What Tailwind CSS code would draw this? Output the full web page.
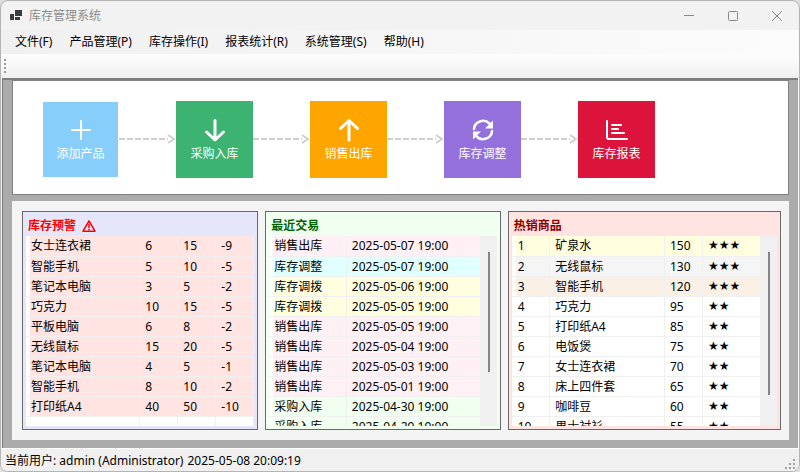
<!DOCTYPE html>
<html lang="zh-CN">
<head>
    <meta charset="UTF-8">
    <meta name="viewport" content="width=device-width, initial-scale=1.0">
    <title>库存管理系统</title>
    <script src="https://cdn.jsdelivr.net/npm/@tailwindcss/browser@4"></script>
</head>
<body class="bg-[#dedede] font-['Noto_Sans','Noto_Sans_CJK_SC',sans-serif] text-xs text-black">
    <div class="h-screen flex flex-col bg-[#f2f2f2] border border-[#b4b4b4] rounded-lg overflow-hidden">
        <!-- Title bar -->
        <header class="h-[29px] shrink-0 flex items-center pl-2">
            <svg class="w-4 h-4" viewBox="0 0 16 16" fill="#3c3c3c" aria-hidden="true">
                <path d="M6 2h7v6H6zM1 6h4v6H1zM6 9h5v3H6z"/>
            </svg>
            <h1 class="pl-1 text-[#8c8c8c]">库存管理系统</h1>
            <div class="ml-auto flex h-full text-[#8a8a8a]">
                <button class="w-11 flex items-center justify-center" aria-label="最小化">
                    <svg class="w-3 h-3" viewBox="0 0 12 12" fill="none" stroke="currentColor"><path d="M1 5.500h10"/></svg>
                </button>
                <button class="w-11 flex items-center justify-center" aria-label="最大化">
                    <svg class="w-3 h-3" viewBox="0 0 12 12" fill="none" stroke="currentColor"><rect x="1.5" y="1.5" width="9" height="9" rx="1"/></svg>
                </button>
                <button class="w-11 flex items-center justify-center" aria-label="关闭">
                    <svg class="w-3 h-3" viewBox="0 0 12 12" fill="none" stroke="currentColor"><path d="M1 1l10 10M11 1L1 11"/></svg>
                </button>
            </div>
        </header>

        <!-- Menu -->
        <nav class="h-6 shrink-0 flex items-center gap-[17px] px-[14px] bg-linear-to-r from-[#f0f0f0] to-[#fcfcfc]">
            <button>文件(F)</button>
            <button>产品管理(P)</button>
            <button>库存操作(I)</button>
            <button>报表统计(R)</button>
            <button>系统管理(S)</button>
            <button>帮助(H)</button>
        </nav>

        <!-- Tool strip -->
        <div class="h-6 shrink-0 flex items-center pl-[3px] bg-linear-to-b from-[#fdfdfd] to-[#f0f0f0]">
            <svg class="w-[2px] h-[14px]" viewBox="0 0 2 14" fill="#9a9a9a" aria-hidden="true">
                <path d="M0 0h2v2H0zM0 4h2v2H0zM0 8h2v2H0zM0 12h2v2H0z"/>
            </svg>
        </div>

        <main class="flex-1 min-h-0 mx-px flex flex-col gap-[6px] pb-2 px-[9px] bg-[#ababab] border-t-2 border-l border-t-[#7d7d7d] border-l-[#7d7d7d]">
            <!-- Workflow -->
            <section class="h-[115px] shrink-0 flex items-center px-[30px] pt-[3px] bg-white border border-[#808080]">
                <button class="w-[75px] h-[75px] flex flex-col items-center justify-center gap-1 pt-px bg-[#87cefa] text-white">
                    <svg class="w-6 h-6" viewBox="0 0 24 24" fill="none" stroke="currentColor" stroke-width="2" stroke-linecap="round"><path d="M12 3v18M3 12h18"/></svg>
                    添加产品
                </button>
                <svg class="w-[58px] h-3" viewBox="0 0 58 12" fill="none" stroke="#cfcfcf" stroke-width="2"><path stroke-dasharray="6 2" d="M1 6h49"/><path d="M50 2l6 4-6 4"/></svg>
                <button class="w-[77px] h-[77px] flex flex-col items-center justify-center gap-1 pt-px bg-[#3cb371] text-white">
                    <svg class="w-6 h-6" viewBox="0 0 24 24" fill="none" stroke="currentColor" stroke-width="3" stroke-linecap="round" stroke-linejoin="round"><path d="M12 2.500v19M3.500 14l8.500 8 8.500-8"/></svg>
                    采购入库
                </button>
                <svg class="w-[57px] h-3" viewBox="0 0 57 12" fill="none" stroke="#cfcfcf" stroke-width="2"><path stroke-dasharray="6 2" d="M0 6h49"/><path d="M49 2l6 4-6 4"/></svg>
                <button class="w-[77px] h-[77px] flex flex-col items-center justify-center gap-1 pt-px bg-[#ffa500] text-white">
                    <svg class="w-6 h-6" viewBox="0 0 24 24" fill="none" stroke="currentColor" stroke-width="3" stroke-linecap="round" stroke-linejoin="round"><path d="M12 22V3M3.500 10.500l8.500-8 8.500 8"/></svg>
                    销售出库
                </button>
                <svg class="w-[57px] h-3" viewBox="0 0 57 12" fill="none" stroke="#cfcfcf" stroke-width="2"><path stroke-dasharray="6 2" d="M0 6h49"/><path d="M49 2l6 4-6 4"/></svg>
                <button class="w-[77px] h-[77px] flex flex-col items-center justify-center gap-1 pt-px bg-[#9370db] text-white">
                    <svg class="w-6 h-6" viewBox="0 0 24 24" fill="none" stroke="currentColor" stroke-width="2.600" stroke-linecap="round">
                        <path d="M3 11a9 8.500 0 0 1 15.500-5.500M21 13a9 8.500 0 0 1-15.500 5.500"/>
                        <path d="M22 2.500v8h-8zM2 21.500v-8h8z" fill="currentColor" stroke="none"/>
                    </svg>
                    库存调整
                </button>
                <svg class="w-[57px] h-3" viewBox="0 0 57 12" fill="none" stroke="#cfcfcf" stroke-width="2"><path stroke-dasharray="6 2" d="M0 6h49"/><path d="M49 2l6 4-6 4"/></svg>
                <button class="w-[77px] h-[77px] flex flex-col items-center justify-center gap-1 pt-px bg-[#dc143c] text-white">
                    <svg class="w-6 h-6" viewBox="0 0 24 24" fill="none" stroke="currentColor" stroke-width="2" stroke-linecap="round" stroke-linejoin="round"><path d="M2 3v16q0 2 2 2h18M7 7h9M7 11h6M7 15h12"/></svg>
                    库存报表
                </button>
            </section>

            <!-- Lists -->
            <section class="flex-1 min-h-0 grid grid-cols-[236fr_235fr_273fr] gap-[7px] p-[10px] pr-2 bg-[#f4f4f4]">
                <div class="min-h-0 flex flex-col p-[3px] bg-[#e6e6fa] border border-[#696969]">
                    <h2 class="h-[21px] shrink-0 flex items-center gap-[6px] pl-[2px] font-bold text-[#ff0000]">
                        库存预警
                        <svg class="w-[14px] h-3" viewBox="0 0 14 12" fill="none" stroke="currentColor" stroke-width="1.500" stroke-linejoin="round" aria-hidden="true"><path d="M7 1l6 10.200H1zM7 4v4M7 8.800v1.400"/></svg>
                    </h2>
                    <div class="flex-1 min-h-0 overflow-hidden bg-white">
                        <table class="w-full"><tbody id="warnings"></tbody></table>
                    </div>
                </div>

                <div class="min-h-0 flex flex-col p-[3px] bg-[#f0fff0] border border-[#696969]">
                    <h2 class="h-[21px] shrink-0 flex items-center pl-[2px] font-bold text-[#006400]">最近交易</h2>
                    <div class="flex-1 min-h-0 flex overflow-hidden bg-white">
                        <div class="flex-1 overflow-hidden">
                            <table class="w-full"><tbody id="transactions"></tbody></table>
                        </div>
                        <div class="w-4 flex justify-center pt-4 bg-[#f0f0f0]">
                            <div class="w-[2px] h-[120px] bg-[#858585]"></div>
                        </div>
                    </div>
                </div>

                <div class="min-h-0 flex flex-col p-[3px] bg-[#ffe4e1] border border-[#696969]">
                    <h2 class="h-[21px] shrink-0 flex items-center pl-[2px] font-bold text-[#8b0000]">热销商品</h2>
                    <div class="flex-1 min-h-0 flex overflow-hidden bg-white">
                        <div class="flex-1 overflow-hidden">
                            <table class="w-full"><tbody id="products"></tbody></table>
                        </div>
                        <div class="w-4 flex justify-center pt-4 bg-[#f0f0f0]">
                            <div class="w-[2px] h-[143px] bg-[#858585]"></div>
                        </div>
                    </div>
                </div>
            </section>
        </main>

        <!-- Status bar -->
        <footer class="h-[23px] shrink-0 flex items-center gap-1 pl-1 pr-[2px] pt-[2px] bg-[#f0f0f0] border-t border-white">
            <span>当前用户: admin (Administrator)</span>
            <span>2025-05-08 20:09:19</span>
            <svg class="ml-auto self-end w-3 h-3" viewBox="0 0 12 12" fill="#a0a0a0" aria-hidden="true">
                <path d="M8 0h2v2H8zM4 4h2v2H4zM8 4h2v2H8zM0 8h2v2H0zM4 8h2v2H4zM8 8h2v2H8z"/>
            </svg>
        </footer>
    </div>

    <script>
        const warnings = [
            ['女士连衣裙', 6, 15, -9],
            ['智能手机', 5, 10, -5],
            ['笔记本电脑', 3, 5, -2],
            ['巧克力', 10, 15, -5],
            ['平板电脑', 6, 8, -2],
            ['无线鼠标', 15, 20, -5],
            ['笔记本电脑', 4, 5, -1],
            ['智能手机', 8, 10, -2],
            ['打印纸A4', 40, 50, -10],
            ['', '', '', '']
        ];

        const transactions = [
            ['销售出库', '2025-05-07 19:00'],
            ['库存调整', '2025-05-07 19:00'],
            ['库存调拨', '2025-05-06 19:00'],
            ['库存调拨', '2025-05-05 19:00'],
            ['销售出库', '2025-05-05 19:00'],
            ['销售出库', '2025-05-04 19:00'],
            ['销售出库', '2025-05-03 19:00'],
            ['销售出库', '2025-05-01 19:00'],
            ['采购入库', '2025-04-30 19:00'],
            ['采购入库', '2025-04-29 19:00']
        ];

        const products = [
            [1, '矿泉水', 150, '★★★'],
            [2, '无线鼠标', 130, '★★★'],
            [3, '智能手机', 120, '★★★'],
            [4, '巧克力', 95, '★★'],
            [5, '打印纸A4', 85, '★★'],
            [6, '电饭煲', 75, '★★'],
            [7, '女士连衣裙', 70, '★★'],
            [8, '床上四件套', 65, '★★'],
            [9, '咖啡豆', 60, '★★'],
            [10, '男士衬衫', 55, '★★']
        ];

        const typeColors = {
            '销售出库': 'bg-[#fff0f5]',
            '库存调整': 'bg-[#e0ffff]',
            '库存调拨': 'bg-[#ffffe0]',
            '采购入库': 'bg-[#f0fff0]'
        };
        const rankColors = ['bg-[#ffffe0]', 'bg-[#f5f5f5]', 'bg-[#faf0e6]'];

        // First cell is the narrow row marker column
        function renderRows(id, rows, widths, colorOf) {
            document.getElementById(id).innerHTML = rows.map((row, i) => `
                <tr class="h-5">
                    <td class="w-1 p-0 bg-white border-b border-[#f0f0f0]"></td>
                    ${row.map((value, c) => `<td class="${widths[c]} ${colorOf(row, i)} h-5 p-0 leading-[19px] whitespace-nowrap border-b border-r border-[#f0f0f0]">${value}</td>`).join('')}
                </tr>
            `).join('');
        }

        renderRows('warnings', warnings, ['pl-px', 'w-[38px] pl-[5px]', 'w-[38px] pl-[5px]', 'w-[38px] pl-[5px]'],
            row => row[0] ? 'bg-[#ffe4e1]' : 'bg-white');
        renderRows('transactions', transactions, ['w-[73px] pl-px', 'pl-[5px]'],
            row => typeColors[row[0]]);
        renderRows('products', products, ['w-[34px] pl-[2px]', 'pl-[5px]', 'w-[38px] pl-[5px]', "w-[58px] pl-[5px] font-['DejaVu_Sans',sans-serif]"],
            (row, i) => rankColors[i] || 'bg-white');
    </script>
</body>
</html>
